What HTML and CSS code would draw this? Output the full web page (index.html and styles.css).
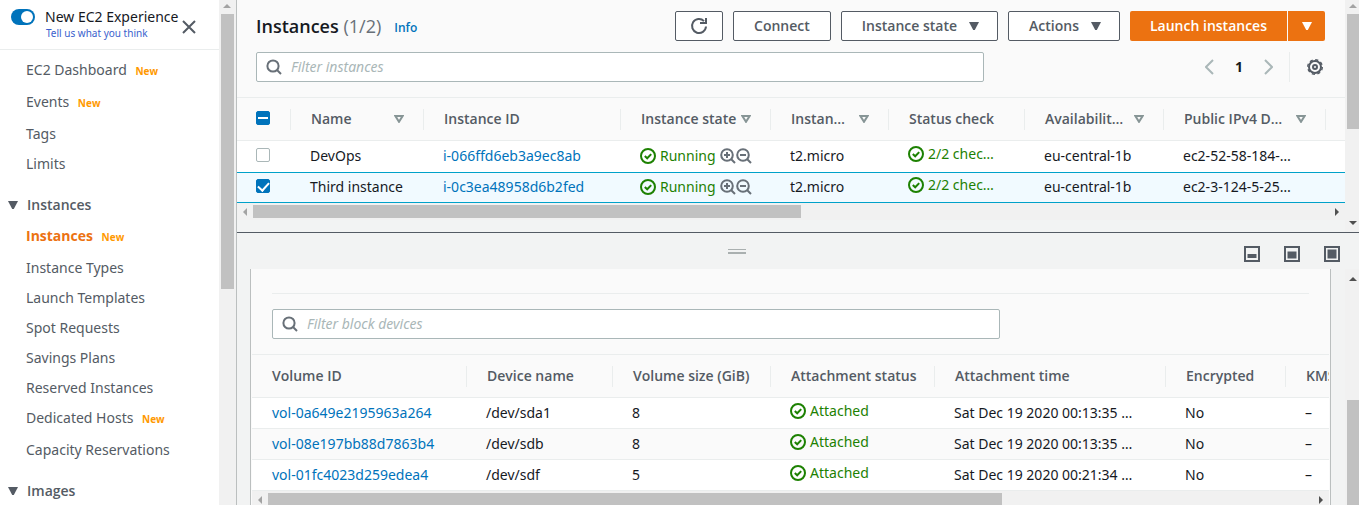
FILE: index.html
```html
<!DOCTYPE html>
<html lang="en">
<head>
<meta charset="utf-8">
<title>Instances | EC2 Management Console</title>
<link rel="stylesheet" href="styles.css">
</head>
<body>
<svg class="sprite" aria-hidden="true">
  <symbol id="ok" viewBox="0 0 16 16"><circle cx="8" cy="8" r="7" fill="none" stroke="currentColor" stroke-width="2"/><path d="M4.8 8l2.4 2.3 4-4.2" fill="none" stroke="currentColor" stroke-width="2"/></symbol>
  <symbol id="search" viewBox="0 0 16 16"><circle cx="7" cy="7" r="5.6" fill="none" stroke="currentColor" stroke-width="2"/><path d="M11 11l4 4" stroke="currentColor" stroke-width="2"/></symbol>
  <symbol id="zoom-in" viewBox="0 0 16 16"><circle cx="7" cy="7" r="5.8" fill="none" stroke="currentColor" stroke-width="2"/><path d="M11 11l4 4M4 7h6M7 4v6" stroke="currentColor" stroke-width="2"/></symbol>
  <symbol id="zoom-out" viewBox="0 0 16 16"><circle cx="7" cy="7" r="5.8" fill="none" stroke="currentColor" stroke-width="2"/><path d="M11 11l4 4M4 7h6" stroke="currentColor" stroke-width="2"/></symbol>
  <symbol id="caret" viewBox="0 0 10 8"><path d="M0 0h10L5.8 8H4.2z" fill="currentColor"/></symbol>
  <symbol id="sort" viewBox="0 0 10 8"><path d="M1.4 1h7.2L5 6.8z" fill="none" stroke="currentColor" stroke-width="2"/></symbol>
</svg>
<div class="app">
  <aside class="side">
    <div class="side-body">
      <div class="side-top">
        <input class="toggle" type="checkbox" role="switch" id="newexp" checked>
        <div class="side-title">
          <label for="newexp">New EC2 Experience</label>
          <a href="#">Tell us what you think</a>
        </div>
        <button class="plain close" aria-label="Close"><svg width="14" height="14" viewBox="0 0 14 14"><path d="M1 1l12 12M13 1L1 13" stroke="currentColor" stroke-width="2"/></svg></button>
      </div>
      <nav class="nav">
        <a class="has-new" href="#">EC2 Dashboard <b>New</b></a>
        <a class="has-new" href="#">Events <b>New</b></a>
        <a href="#">Tags</a>
        <a href="#">Limits</a>
        <button class="plain section"><svg width="10" height="8"><use href="#caret"/></svg>Instances</button>
        <a class="has-new current" href="#">Instances <b>New</b></a>
        <a href="#">Instance Types</a>
        <a href="#">Launch Templates</a>
        <a href="#">Spot Requests</a>
        <a href="#">Savings Plans</a>
        <a href="#">Reserved Instances</a>
        <a class="has-new" href="#">Dedicated Hosts <b>New</b></a>
        <a href="#">Capacity Reservations</a>
        <button class="plain section"><svg width="10" height="8"><use href="#caret"/></svg>Images</button>
      </nav>
    </div>
    <div class="vbar"><i class="up off"></i><span class="thumb side-thumb"></span></div>
  </aside>

  <main class="main">
    <section class="pane pane-top">
      <div class="pane-body">
        <header class="head">
          <div class="head-row">
            <h1>Instances <span>(1/2)</span></h1>
            <a class="info" href="#">Info</a>
            <div class="actions">
              <button class="btn btn-icon" aria-label="Refresh"><svg width="18" height="18" viewBox="0 0 18 18"><path d="M16 9.500A7 7 0 1 1 14 4.100" fill="none" stroke="currentColor" stroke-width="2"/><path d="M16 1v5h-6" fill="none" stroke="currentColor" stroke-width="2"/></svg></button>
              <button class="btn">Connect</button>
              <button class="btn">Instance state<svg width="10" height="8"><use href="#caret"/></svg></button>
              <button class="btn">Actions<svg width="10" height="8"><use href="#caret"/></svg></button>
              <div class="split">
                <button class="primary">Launch instances</button>
                <button class="primary more" aria-label="More launch options"><svg width="10" height="8"><use href="#caret"/></svg></button>
              </div>
            </div>
          </div>
          <div class="head-row">
            <label class="filter"><svg width="16" height="16"><use href="#search"/></svg><input type="text" placeholder="Filter instances" aria-label="Filter instances"></label>
            <div class="pager">
              <button class="plain" aria-label="Previous page"><svg width="9" height="16" viewBox="0 0 9 16"><path d="M8 1L1 8l7 7" fill="none" stroke="currentColor" stroke-width="2"/></svg></button>
              <span>1</span>
              <button class="plain" aria-label="Next page"><svg width="9" height="16" viewBox="0 0 9 16"><path d="M1 1l7 7-7 7" fill="none" stroke="currentColor" stroke-width="2"/></svg></button>
            </div>
            <button class="plain gear" aria-label="Preferences"><svg width="16" height="16" viewBox="0 0 16 16"><circle cx="8" cy="8" r="6" fill="none" stroke="currentColor" stroke-width="2"/><circle cx="8" cy="8" r="7.300" fill="none" stroke="currentColor" stroke-width="1.400" stroke-dasharray="3.200 2.533"/><circle cx="8" cy="8" r="2" fill="none" stroke="currentColor" stroke-width="2"/></svg></button>
          </div>
        </header>
        <table class="grid instances">
          <colgroup><col class="w-check"><col class="w-name"><col class="w-id"><col class="w-state"><col class="w-type"><col class="w-status"><col class="w-zone"><col class="w-dns"><col></colgroup>
          <thead><tr>
            <th><input class="check mixed" type="checkbox" aria-label="Select all"></th>
            <th><div>Name<svg width="10" height="8"><use href="#sort"/></svg></div></th>
            <th><div>Instance ID</div></th>
            <th><div>Instance state<svg width="10" height="8"><use href="#sort"/></svg></div></th>
            <th><div>Instan…<svg width="10" height="8"><use href="#sort"/></svg></div></th>
            <th><div>Status check</div></th>
            <th><div>Availabilit…<svg width="10" height="8"><use href="#sort"/></svg></div></th>
            <th><div>Public IPv4 D…<svg width="10" height="8"><use href="#sort"/></svg></div></th>
            <th></th>
          </tr></thead>
          <tbody>
            <tr>
              <td><input class="check" type="checkbox" aria-label="Select DevOps"></td>
              <td>DevOps</td><td><a href="#">i-066ffd6eb3a9ec8ab</a></td>
              <td><div class="ok"><svg width="16" height="16"><use href="#ok"/></svg>Running<span class="zooms"><svg width="16" height="16"><use href="#zoom-in"/></svg><svg width="16" height="16"><use href="#zoom-out"/></svg></span></div></td>
              <td>t2.micro</td>
              <td><div class="ok raised"><svg width="16" height="16"><use href="#ok"/></svg>2/2 chec…</div></td>
              <td>eu-central-1b</td><td>ec2-52-58-184-…</td><td></td>
            </tr>
            <tr class="selected">
              <td><input class="check" type="checkbox" aria-label="Select Third instance" checked></td>
              <td>Third instance</td><td><a href="#">i-0c3ea48958d6b2fed</a></td>
              <td><div class="ok"><svg width="16" height="16"><use href="#ok"/></svg>Running<span class="zooms"><svg width="16" height="16"><use href="#zoom-in"/></svg><svg width="16" height="16"><use href="#zoom-out"/></svg></span></div></td>
              <td>t2.micro</td>
              <td><div class="ok raised"><svg width="16" height="16"><use href="#ok"/></svg>2/2 chec…</div></td>
              <td>eu-central-1b</td><td>ec2-3-124-5-25…</td><td></td>
            </tr>
          </tbody>
        </table>
        <div class="hbar"><i class="left off"></i><div class="track"><span class="thumb" style="width:51%"></span></div><i class="right"></i></div>
      </div>
      <div class="vbar"><i class="up off"></i><span class="thumb top-thumb"></span><i class="down"></i></div>
    </section>

    <div class="divider">
      <span class="grip"></span>
      <div class="layouts">
        <button class="plain" aria-label="Small panel"><svg width="16" height="16" viewBox="0 0 16 16"><path d="M1 1h14v14H1z" fill="none" stroke="currentColor" stroke-width="2"/><path d="M3.500 8h9v4h-9z" fill="currentColor"/></svg></button>
        <button class="plain" aria-label="Medium panel"><svg width="16" height="16" viewBox="0 0 16 16"><path d="M1 1h14v14H1z" fill="none" stroke="currentColor" stroke-width="2"/><path d="M3.500 5.500h9v7h-9z" fill="currentColor"/></svg></button>
        <button class="plain" aria-label="Full panel"><svg width="16" height="16" viewBox="0 0 16 16"><path d="M1 1h14v14H1z" fill="none" stroke="currentColor" stroke-width="2"/><path d="M3.500 3.500h9v9h-9z" fill="currentColor"/></svg></button>
      </div>
    </div>

    <section class="pane pane-bottom">
      <div class="card">
        <div class="card-head">
          <label class="filter"><svg width="16" height="16"><use href="#search"/></svg><input type="text" placeholder="Filter block devices" aria-label="Filter block devices"></label>
        </div>
        <table class="grid volumes">
          <colgroup><col class="w-vol"><col class="w-dev"><col class="w-size"><col class="w-att"><col class="w-time"><col class="w-enc"><col></colgroup>
          <thead><tr>
            <th><div>Volume ID</div></th><th><div>Device name</div></th><th><div>Volume size (GiB)</div></th><th><div>Attachment status</div></th><th><div>Attachment time</div></th><th><div>Encrypted</div></th><th><div>KMS</div></th>
          </tr></thead>
          <tbody>
            <tr><td><a href="#">vol-0a649e2195963a264</a></td><td>/dev/sda1</td><td>8</td><td><div class="ok raised"><svg width="16" height="16"><use href="#ok"/></svg>Attached</div></td><td>Sat Dec 19 2020 00:13:35 …</td><td>No</td><td>–</td></tr>
            <tr><td><a href="#">vol-08e197bb88d7863b4</a></td><td>/dev/sdb</td><td>8</td><td><div class="ok raised"><svg width="16" height="16"><use href="#ok"/></svg>Attached</div></td><td>Sat Dec 19 2020 00:13:35 …</td><td>No</td><td>–</td></tr>
            <tr><td><a href="#">vol-01fc4023d259edea4</a></td><td>/dev/sdf</td><td>5</td><td><div class="ok raised"><svg width="16" height="16"><use href="#ok"/></svg>Attached</div></td><td>Sat Dec 19 2020 00:21:34 …</td><td>No</td><td>–</td></tr>
          </tbody>
        </table>
        <div class="hbar"><i class="left off"></i><div class="track"><span class="thumb" style="width:70.3%"></span></div><i class="right"></i></div>
      </div>
      <div class="vbar"><i class="up"></i><span class="thumb bottom-thumb"></span></div>
    </section>
  </main>
</div>
</body>
</html>
```

FILE: styles.css
```css
* { box-sizing: border-box; }
body {
  margin: 0;
  overflow: hidden;
  font: 14px/20px "Noto Sans", "Open Sans", sans-serif;
  color: #16191f;
  background: #f2f3f3;
}
a { color: #0073bb; text-decoration: none; }
button, input { font: inherit; color: inherit; margin: 0; }
svg { display: block; flex: none; }
h1, .info, .btn, .primary, .grid th, .nav b, .nav .current, .nav .section { font-family: "Open Sans", "Noto Sans", sans-serif; font-weight: 600; }
.sprite { position: absolute; width: 0; height: 0; }
.plain { border: 0; padding: 0; background: none; display: flex; align-items: center; color: #545b64; }
.app { display: flex; height: 100vh; }

/* scrollbars */
.vbar { flex: none; display: flex; flex-direction: column; width: 14px; padding-left: 2px; background: #f1f1f1; overflow: hidden; }
.vbar i { flex: none; border: 4px solid transparent; width: 8px; height: 4px; }
.vbar .up { border-top: 0; border-bottom-color: #505050; margin: 4px 0 6px 2px; }
.vbar .down { border-bottom: 0; border-top-color: #505050; margin: auto 0 7px 2px; }
.vbar .off { border-bottom-color: #a3a3a3; }
.thumb { display: block; background: #c1c1c1; }
.hbar { display: flex; align-items: center; height: 17px; background: #f1f1f1; }
.hbar i { flex: none; width: 4px; height: 8px; border: 4px solid transparent; }
.hbar .left { border-left: 0; border-right-color: #a3a3a3; margin: 0 6px 0 6px; }
.hbar .right { border-right: 0; border-left-color: #505050; margin: 0 6px 0 7px; }
.track { flex: 1; }
.track .thumb { height: 13px; }

/* side navigation */
.side { flex: none; display: flex; background: #fff; }
.side-body { width: 219px; overflow: hidden; }
.side .vbar { width: 17px; }
.side-thumb { width: 13px; height: 275px; }
.side-top { display: flex; align-items: flex-start; height: 50px; padding: 8px 0 0 11px; border-bottom: 1px solid #eaeded; }
.toggle { appearance: none; width: 24px; height: 16px; margin: 1px 10px 0 0; padding: 2px; border-radius: 8px; background: #0073bb; }
.toggle::after { content: ""; display: block; width: 12px; height: 12px; margin-left: auto; border-radius: 50%; background: #fff; }
.side-title { display: flex; flex-direction: column; width: 137px; white-space: nowrap; }
.side-title label { line-height: 18px; }
.side-title a { font-size: 10px; line-height: 14px; color: #3a5fcd; padding-left: 1px; }
.close { margin-top: 12px; }
.nav { display: flex; flex-direction: column; padding-top: 5px; }
.nav a { flex: none; height: 30px; padding-left: 26px; line-height: 30px; color: #545b64; }
.nav .has-new { height: 32px; }
.nav b { margin-left: 5px; font-size: 10px; font-weight: bold; color: #ff9900; }
.nav .current { color: #ec7211; font-weight: bold; }
.nav .section { flex: none; gap: 9px; height: 31px; margin-top: 11px; padding: 0 0 1px 8px; }

/* main column */
.main { flex: 1; min-width: 0; display: flex; flex-direction: column; border-left: 1px solid #bbbfbf; }
.pane { display: flex; min-width: 0; }
.pane-top { flex: none; border-bottom: 1px solid #545b64; }
.pane-body { flex: 1; min-width: 0; padding-bottom: 12px; }
.top-thumb { height: 115px; }
.head { display: grid; gap: 11px; padding: 11px 20px 15px 19px; background: #fafafa; border-bottom: 1px solid #eaeded; }
.head-row { display: flex; align-items: center; height: 30px; }
h1 { margin: 0; font-size: 18px; line-height: 30px; }
h1 span { font-weight: normal; color: #687078; }
.info { margin: 4px 0 0 13px; font-size: 12px; }
.actions { display: flex; gap: 10px; margin-left: auto; }
.btn, .primary { display: flex; align-items: center; justify-content: center; gap: 12px; height: 30px; padding: 0 20px; border: 1px solid #545b64; border-radius: 2px; background: #fff; color: #545b64; white-space: nowrap; }
.btn-icon { width: 48px; padding: 0; }
.btn svg { margin-right: -2px; }
.btn-icon svg { margin-right: 0; }
.split { display: flex; gap: 1px; }
.primary { border: 0; background: #ec7211; color: #fff; border-radius: 2px 0 0 2px; }
.primary.more { width: 37px; padding: 0; border-radius: 0 2px 2px 0; }
.filter { display: flex; align-items: center; gap: 9px; flex: 1; max-width: 728px; height: 30px; padding: 0 9px; border: 1px solid #aab7b8; border-radius: 2px; background: #fff; color: #687078; }
.filter input { flex: 1; border: 0; padding: 0; outline: 0; background: none; }
.filter input::placeholder { color: #aab7b8; font-style: italic; opacity: 1; }
.pager { display: flex; align-items: center; gap: 21px; margin-left: auto; padding-right: 16px; font-weight: bold; }
.pager button { color: #aab7b8; }
.gear { height: 30px; padding: 0 2px 0 17px; border-left: 1px solid #eaeded; }

/* data tables */
.grid { width: 100%; table-layout: fixed; border-collapse: separate; border-spacing: 0; background: #fff; }
.grid th, .grid td { padding: 0 0 0 19px; text-align: left; white-space: nowrap; overflow: hidden; border-bottom: 1px solid #eaeded; }
.grid th { height: 43px; padding: 0; background: #fafafa; color: #545b64; }
.grid th > div { display: flex; align-items: center; justify-content: space-between; height: 21px; padding: 0 19px 0 20px; border-right: 1px solid #eaeded; }
.grid th:last-child > div { border-right: 0; padding-right: 0; }
.grid th svg { color: #879596; }
.grid td { height: 31px; }
.instances th:first-child { background: linear-gradient(#eaeded, #eaeded) right center / 1px 21px no-repeat #fafafa; padding-left: 19px; }
.instances tbody td { border-bottom-color: #fff; }
.instances .selected td { padding-bottom: 2px; background: #f1faff; border-top: 1px solid #00a1c9; border-bottom-color: #00a1c9; }
.w-check { width: 54px; } .w-name { width: 133px; } .w-id { width: 197px; } .w-state { width: 150px; } .w-type { width: 118px; }
.w-status { width: 136px; } .w-zone { width: 139px; } .w-dns { width: 162px; }
.w-vol { width: 215px; } .w-dev { width: 146px; } .w-size { width: 158px; } .w-att { width: 164px; } .w-time { width: 231px; } .w-enc { width: 120px; }
.check { appearance: none; display: grid; place-items: center; width: 14px; height: 14px; margin-bottom: 2px; border: 1px solid #aab7b8; border-radius: 2px; background: #fff; }
.check:checked, .check.mixed { border-color: #0073bb; background: #0073bb; }
.check.mixed::after { content: ""; width: 10px; height: 2px; background: #fff; }
.check:checked::after { content: ""; width: 5px; height: 9px; margin-bottom: 2px; border: solid #fff; border-width: 0 2px 2px 0; transform: rotate(42deg); }
.ok { display: flex; align-items: center; gap: 4px; color: #1d8102; }
.raised { padding-bottom: 4px; }
.zooms { display: flex; color: #687078; }

/* split panel */
.divider { flex: none; display: flex; align-items: center; height: 36px; padding-right: 19px; }
.grip { width: 18px; height: 5px; margin: 0 auto; border: solid #aab0b0; border-width: 1px 0 2px; }
.layouts { display: flex; gap: 24px; padding: 6px 0 0 8px; }
.pane-bottom { flex: 1; min-height: 0; }
.pane-bottom .up { margin: 8px 0 6px 2px; }
.card { flex: 1; min-width: 0; margin: 0 14px 0 13px; padding: 0 1px; border: solid #bbbfbf; border-width: 0 1px; background: #fafafa; overflow: hidden; }
.card-head { padding: 40px 20px 15px; border-bottom: 1px solid #eaeded; background: linear-gradient(#eaeded, #eaeded) 20px 24px / calc(100% - 40px) 1px no-repeat; }
.volumes td:first-child { padding-left: 20px; }
.volumes tr:nth-child(even) td { background: #fafafa; }
.bottom-thumb { height: 120px; margin-top: 113px; flex: none; }
```
